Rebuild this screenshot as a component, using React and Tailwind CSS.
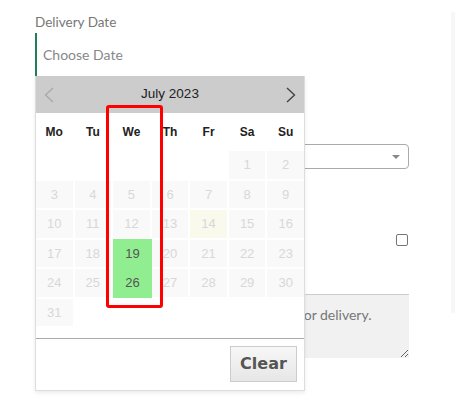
import React from "react";

const rows = [
  [null, null, null, null, null, 1, 2],
  [3, 4, 5, 6, 7, 8, 9],
  [10, 11, 12, 13, 14, 15, 16],
  [17, 18, 19, 20, 21, 22, 23],
  [24, 25, 26, 27, 28, 29, 30],
  [31, null, null, null, null, null, null],
];

const days = ["Mo", "Tu", "We", "Th", "Fr", "Sa", "Su"];

function Cell({ d }) {
  if (d === null) return <div className="h-[27.5px]" />;
  if (d === 19 || d === 26) {
    return (
      <div className="-my-px mr-[-2px] flex items-center justify-center bg-[#90ee90] text-[13px] text-[#555]">
        {d}
      </div>
    );
  }
  if (d === 14) {
    return (
      <div className="flex h-[27.5px] items-center justify-center bg-[#f9f9ec] text-[13px] text-[#d8d8d8]">
        {d}
      </div>
    );
  }
  return (
    <div className="flex h-[27.5px] items-center justify-center bg-[#f9f9f9] text-[13px] text-[#d8d8d8]">
      {d}
    </div>
  );
}

export default function App() {
  return (
    <div className="relative flex h-[404px] w-[455px] overflow-hidden bg-white pl-[35px] font-['Lato',sans-serif]">
      {/* form column */}
      <div className="flex w-[374px] flex-col pt-[12px]">
        <div className="text-[13.5px] leading-[20px] text-[#777]">Delivery Date</div>
        <div className="mt-[1px] flex h-[43px] items-center border-l-2 border-[#1f7f55] pl-[6px] text-[14px] text-[#888]">
          Choose Date
        </div>
        <div className="relative mt-[68px] h-[25px] rounded-[4px] border border-[#aaa] bg-white">
          <div className="absolute right-[8px] top-[10px] h-0 w-0 border-x-[4px] border-t-[4px] border-x-transparent border-t-[#888]" />
        </div>
        <div className="mt-[61px] flex h-[20px] items-center justify-end">
          <span className="mr-[1px] h-[12px] w-[12px] rounded-[2px] border border-[#767676] bg-white" />
        </div>
        <textarea
          className="mt-[44px] h-[64px] w-full resize-y border-t border-[#ccc] bg-[#f1f1f1] px-[8px] pt-[10px] text-[14px] leading-[20px] text-[#777] outline-none placeholder:text-[#777]"
          placeholder="Please enter any special instructions here for delivery."
        />
      </div>

      {/* right panel edge */}
      <div className="ml-[42px] mt-[12px] h-[301px] w-[4px] bg-[#f7f7f7]" />

      {/* datepicker popup */}
      <div className="absolute left-[35px] top-[76px] flex h-[315px] w-[270px] flex-col border border-t-0 border-[#ddd] bg-white font-['Liberation_Sans',Arial,sans-serif] shadow-[0_2px_4px_rgba(0,0,0,0.08)]">
        <div className="flex h-[37px] items-center bg-[#ccc] px-[8px]">
          <svg width="10" height="16" viewBox="0 0 10 16" className="shrink-0">
            <polyline points="9,1 1.5,8 9,15" fill="none" stroke="#a8a8a8" strokeWidth="1.3" />
          </svg>
          <div className="flex-1 text-center text-[13.5px] text-[#222]">July 2023</div>
          <svg width="10" height="16" viewBox="0 0 10 16" className="shrink-0">
            <polyline points="1,1 8.5,8 1,15" fill="none" stroke="#444" strokeWidth="1.4" />
          </svg>
        </div>
        <div className="grid h-[38px] grid-cols-7 items-center gap-x-[2px]">
          {days.map((d) => (
            <div key={d} className="text-center text-[12px] font-bold text-[#222]">
              {d}
            </div>
          ))}
        </div>
        <div className="grid grid-cols-7 gap-x-[2px] gap-y-[2px]">
          {rows.flat().map((d, i) => (
            <Cell key={i} d={d} />
          ))}
        </div>
        <div className="mt-auto flex h-[52px] justify-end border-t border-[#aaa] pr-[7px] pt-[7px]">
          <button className="h-[36px] w-[67px] border border-[#ccc] bg-gradient-to-b from-[#f7f7f7] to-[#e6e6e6] font-['DejaVu_Sans',sans-serif] text-[16px] font-bold text-[#555]">
            Clear
          </button>
        </div>
      </div>

      {/* highlight annotation */}
      <div className="absolute left-[106px] top-[105px] h-[203px] w-[57px] rounded-[3px] border-[3px] border-[#ff0000]" />
    </div>
  );
}
